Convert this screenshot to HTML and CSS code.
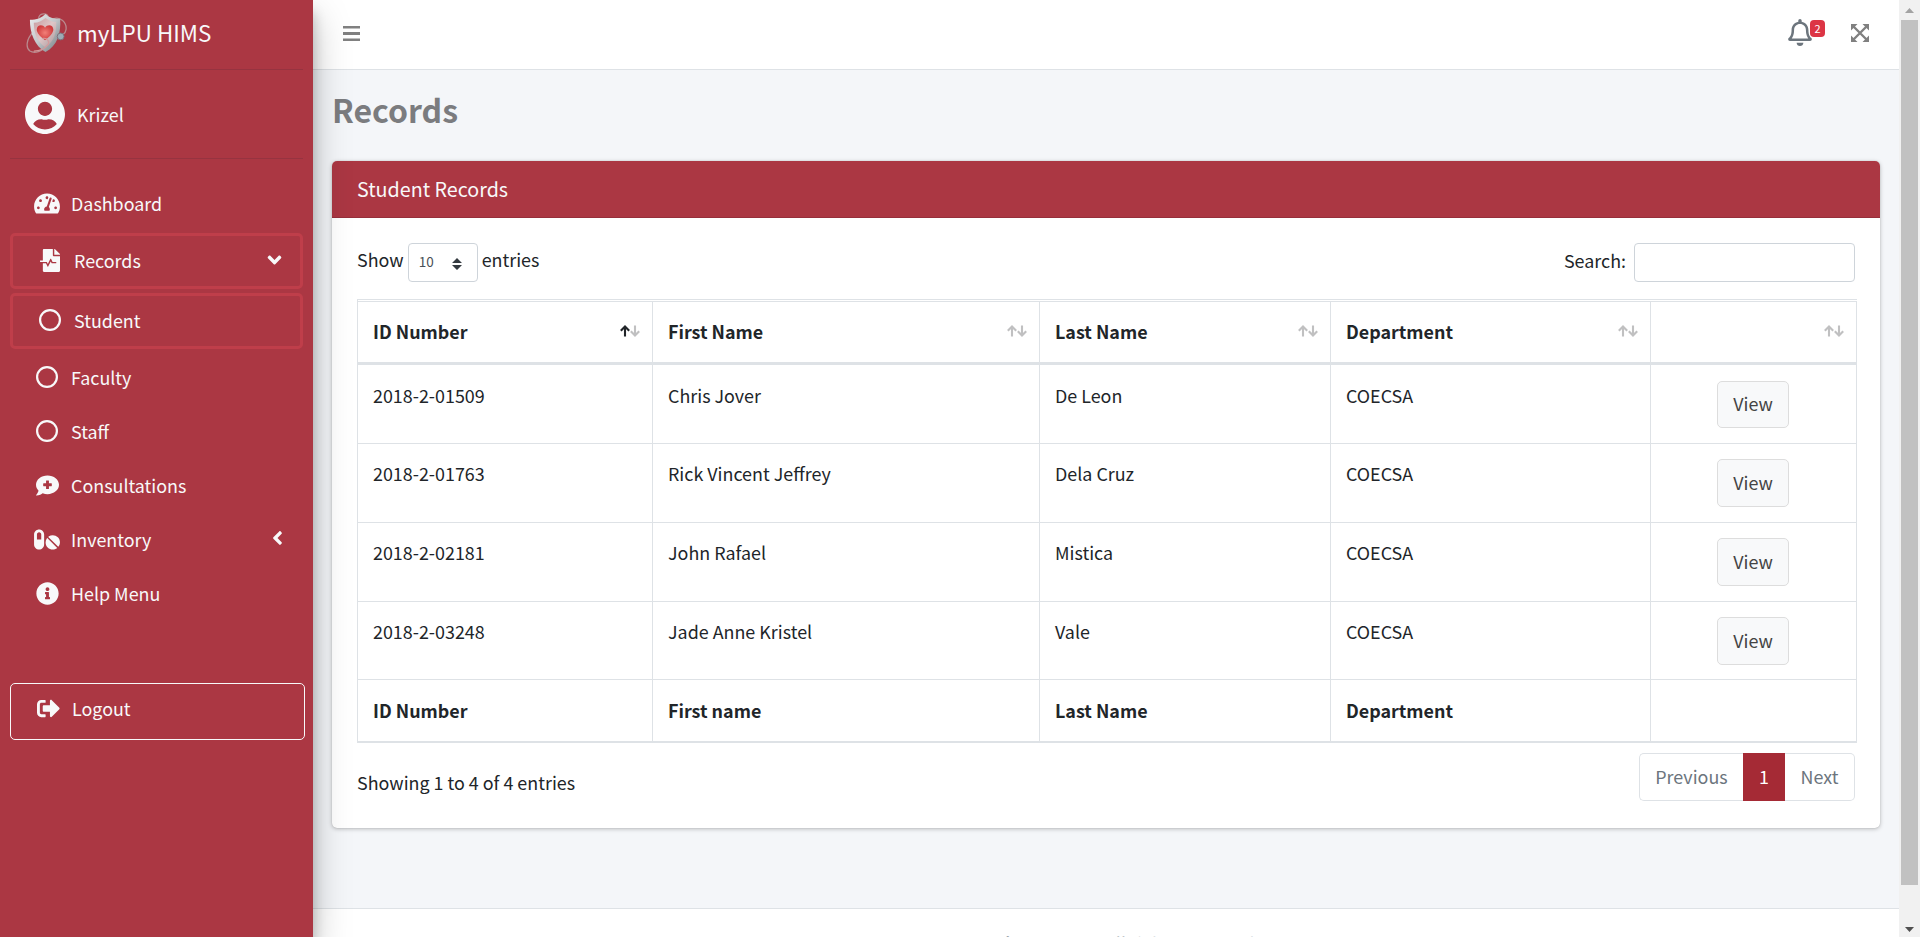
FILE: index.html
```html
<!DOCTYPE html>
<html lang="en">
<head>
<meta charset="utf-8">
<title>myLPU HIMS</title>
<link rel="stylesheet" href="styles.css">
</head>
<body>
<svg class="defs" aria-hidden="true">
  <symbol id="sort-up" viewBox="0 0 10 12"><path d="M5 11.6V1.6M.8 5.8 5 1.5l4.200 4.300" fill="none" stroke="currentColor" stroke-width="2.100"/></symbol>
  <symbol id="sort-down" viewBox="0 0 10 12"><path d="M5 .4v10M.8 6.200 5 10.500l4.200-4.300" fill="none" stroke="currentColor" stroke-width="2.100"/></symbol>
  <symbol id="ring" viewBox="0 0 22 22"><circle cx="11" cy="11" r="9.900" fill="none" stroke="currentColor" stroke-width="2.200"/></symbol>
  <symbol id="angle" viewBox="0 0 256 512"><path d="M31.7 239l136-136c9.4-9.4 24.6-9.4 33.9 0l22.6 22.6c9.4 9.4 9.4 24.6 0 33.9L127.9 256l96.4 96.4c9.4 9.4 9.4 24.6 0 33.9L201.7 409c-9.4 9.4-24.6 9.4-33.9 0l-136-136c-9.5-9.4-9.5-24.6-.1-34z"/></symbol>
</svg>
<div class="app">
  <aside class="sidebar">
    <div class="brand">
      <svg class="logo" viewBox="0 0 42 42">
        <defs>
          <linearGradient id="steel" x1="0" y1="0" x2="1" y2="1"><stop offset="0" stop-color="#eceeef"/><stop offset=".5" stop-color="#c3c7ca"/><stop offset="1" stop-color="#70777c"/></linearGradient>
          <linearGradient id="inner" x1="0" y1="0" x2="1" y2="1"><stop offset="0" stop-color="#c99b9e"/><stop offset=".5" stop-color="#dfc6c7"/><stop offset="1" stop-color="#a6989b"/></linearGradient>
          <radialGradient id="heart"><stop offset="0" stop-color="#f28078"/><stop offset="1" stop-color="#cf3d3e"/></radialGradient>
        </defs>
        <path d="M13 6c0-6 9-7 10-1M28 6c7-3 14 4 13 11-.3 2-1.500 4-3 5M7 20C1 26-1 35 4 39c5 3 14 0 19-7" fill="none" stroke="#b98a8e" stroke-width="1.300"/>
        <path d="M20 1c4 4 9 5 15 5 1 15-3 28-15 34C9 34 4 21 4 7c7 0 12-2 16-6z" fill="url(#steel)"/>
        <path d="M20 5c4 3 7 4 11 4 0 12-2 20-11 26C12 30 8 21 8 10c5 0 8-2 12-5z" fill="url(#inner)"/>
        <path d="M19.500 28C14 24 11 20 11 17c0-5 6-6 8.500-2 2.500-4 8.500-3 8.500 2 0 3-3 7-8.500 11z" fill="url(#heart)"/>
        <path d="M17 26c5-1 8 4 5 7-3 4-8 6-14 6" fill="none" stroke="#d49a9b" stroke-width="1.200"/>
        <circle cx="35.500" cy="24" r="3.500" fill="#9cabb5" stroke="#7b6f78"/>
      </svg>
      <span class="brand-name">myLPU HIMS</span>
    </div>
    <div class="user">
      <svg class="avatar" viewBox="0 8 496 496"><path d="M248 8C111 8 0 119 0 256s111 248 248 248 248-111 248-248S385 8 248 8zm0 96c48.600 0 88 39.400 88 88s-39.400 88-88 88-88-39.400-88-88 39.400-88 88-88zm0 344c-58.700 0-111.300-26.600-146.500-68.200 18.800-35.400 55.600-59.800 98.500-59.800 2.400 0 4.800.4 7.100 1.100 13 4.200 26.600 6.900 40.900 6.900 14.300 0 28-2.700 40.900-6.900 2.300-.7 4.700-1.100 7.100-1.100 42.900 0 79.700 24.400 98.500 59.800C359.300 421.400 306.700 448 248 448z"/></svg>
      <span class="user-name">Krizel</span>
    </div>
    <nav class="menu">
      <a class="item"><span class="ico"><svg class="w26" viewBox="0 0 576 512"><path d="M288 32C128.940 32 0 160.940 0 320c0 52.800 14.250 102.260 39.060 144.800 5.610 9.620 16.300 15.200 27.440 15.200h443c11.140 0 21.830-5.580 27.440-15.200C561.750 422.260 576 372.800 576 320c0-159.060-128.940-288-288-288zm0 64c14.710 0 26.580 10.130 30.320 23.650-1.110 2.260-2.640 4.230-3.450 6.670l-9.220 27.670c-5.130 3.490-10.970 6.010-17.640 6.010-17.670 0-32-14.330-32-32S270.330 96 288 96zM96 384c-17.670 0-32-14.330-32-32s14.330-32 32-32 32 14.330 32 32-14.330 32-32 32zm48-160c-17.670 0-32-14.330-32-32s14.330-32 32-32 32 14.330 32 32-14.330 32-32 32zm246.770-72.410l-61.330 184C343.130 347.330 352 364.540 352 384c0 11.720-3.380 22.550-8.880 32H232.880c-5.500-9.450-8.880-20.280-8.880-32 0-33.940 26.500-61.430 59.900-63.590l61.340-184.010c4.170-12.560 17.730-19.450 30.360-15.170 12.570 4.190 19.350 17.790 15.170 30.360zm14.660 57.200l15.520-46.550c3.470-1.290 7.130-2.230 11.050-2.230 17.670 0 32 14.330 32 32s-14.330 32-32 32c-11.380-.01-20.890-6.280-26.570-15.220zM480 384c-17.670 0-32-14.330-32-32s14.330-32 32-32 32 14.330 32 32-14.330 32-32 32z"/></svg></span><span class="label">Dashboard</span></a>
      <a class="item boxed"><span class="ico"><svg class="w20" viewBox="0 0 448 512"><path d="M288 136V0H88C74.700 0 64 10.700 64 24v232H8c-4.400 0-8 3.600-8 8v16c0 4.400 3.600 8 8 8h140.900c3 0 5.800 1.700 7.200 4.400l19.900 39.800 56.800-113.700c2.900-5.900 11.400-5.900 14.300 0l34.700 69.500H352c8.800 0 16 7.200 16 16s-7.200 16-16 16h-89.900L240 275.800l-56.800 113.700c-2.900 5.900-11.400 5.900-14.300 0L134.100 320H64v168c0 13.300 10.700 24 24 24h336c13.300 0 24-10.700 24-24V160H312c-13.200 0-24-10.800-24-24zm153-31L343.100 7c-4.500-4.500-10.600-7-17-7H320v128h128v-6.100c0-6.300-2.500-12.400-7-16.900z"/></svg></span><span class="label">Records</span><svg class="angle open"><use href="#angle"/></svg></a>
      <a class="item boxed"><span class="ico"><svg class="w22"><use href="#ring"/></svg></span><span class="label">Student</span></a>
      <a class="item"><span class="ico"><svg class="w22"><use href="#ring"/></svg></span><span class="label">Faculty</span></a>
      <a class="item"><span class="ico"><svg class="w22"><use href="#ring"/></svg></span><span class="label">Staff</span></a>
      <a class="item"><span class="ico"><svg class="w23" viewBox="0 0 512 512"><path d="M256 32C114.620 32 0 125.120 0 240c0 49.560 21.410 95 57 130.740C44.460 421.050 2.700 466 2.200 466.500A8 8 0 0 0 8 480c66.260 0 116-31.750 140.600-51.380A304.660 304.660 0 0 0 256 448c141.390 0 256-93.120 256-208S397.390 32 256 32zm96 232a8 8 0 0 1-8 8h-56v56a8 8 0 0 1-8 8h-48a8 8 0 0 1-8-8v-56h-56a8 8 0 0 1-8-8v-48a8 8 0 0 1 8-8h56v-56a8 8 0 0 1 8-8h48a8 8 0 0 1 8 8v56h56a8 8 0 0 1 8 8z"/></svg></span><span class="label">Consultations</span></a>
      <a class="item"><span class="ico"><svg class="w26" viewBox="0 0 576 512"><path d="M112 32C50.100 32 0 82.100 0 144v224c0 61.900 50.100 112 112 112s112-50.100 112-112V144c0-61.900-50.100-112-112-112zm48 224H64V144c0-26.500 21.500-48 48-48s48 21.500 48 48v112zm139.700-29.700c-3.500-3.500-9.400-3.100-12.300.8-45.500 62.500-40.400 150.100 15.900 206.400 56.300 56.300 143.900 61.400 206.400 15.900 4-2.900 4.300-8.800.8-12.300L299.700 226.300zm229.800-19c-56.300-56.300-143.900-61.400-206.400-15.900-4 2.900-4.300 8.800-.8 12.300l210.800 210.800c3.500 3.500 9.400 3.100 12.300-.8 45.600-62.500 40.500-150.100-15.900-206.400z"/></svg></span><span class="label">Inventory</span><svg class="angle"><use href="#angle"/></svg></a>
      <a class="item"><span class="ico"><svg class="w23" viewBox="0 0 512 512"><path d="M256 8C119.043 8 8 119.083 8 256c0 136.997 111.043 248 248 248s248-111.003 248-248C504 119.083 392.957 8 256 8zm0 110c23.196 0 42 18.804 42 42s-18.804 42-42 42-42-18.804-42-42 18.804-42 42-42zm56 254c0 6.627-5.373 12-12 12h-88c-6.627 0-12-5.373-12-12v-24c0-6.627 5.373-12 12-12h12v-64h-12c-6.627 0-12-5.373-12-12v-24c0-6.627 5.373-12 12-12h64c6.627 0 12 5.373 12 12v100h12c6.627 0 12 5.373 12 12v24z"/></svg></span><span class="label">Help Menu</span></a>
      <a class="item logout"><span class="ico"><svg class="w23" viewBox="0 0 512 512"><path d="M497 273L329 441c-15 15-41 4.500-41-17v-96H152c-13.300 0-24-10.700-24-24v-96c0-13.300 10.700-24 24-24h136V88c0-21.400 25.900-32 41-17l168 168c9.300 9.400 9.300 24.600 0 34zM192 436v-40c0-6.600-5.400-12-12-12H96c-17.700 0-32-14.300-32-32V160c0-17.700 14.300-32 32-32h84c6.600 0 12-5.400 12-12V76c0-6.600-5.400-12-12-12H96c-53 0-96 43-96 96v192c0 53 43 96 96 96h84c6.600 0 12-5.400 12-12z"/></svg></span><span class="label">Logout</span></a>
    </nav>
  </aside>

  <div class="main">
    <header class="topbar">
      <svg class="bars" viewBox="0 0 17 15"><path d="M0 0h17v2.400H0zM0 6h17v3H0zM0 12.600h17v2.400H0z"/></svg>
      <div class="tools">
        <span class="bell-wrap">
          <svg class="bell" viewBox="0 0 448 512"><path d="M439.390 362.290c-19.320-20.760-55.470-51.990-55.470-154.290 0-77.700-54.480-139.900-127.940-155.160V32c0-17.670-14.320-32-31.980-32s-31.980 14.330-31.980 32v20.840C118.560 68.100 64.080 130.300 64.080 208c0 102.300-36.150 133.530-55.470 154.290-6 6.450-8.660 14.160-8.610 21.710.11 16.400 12.980 32 32.100 32h383.800c19.120 0 32-15.600 32.100-32 .05-7.550-2.610-15.270-8.610-21.710zM67.530 368c21.220-27.970 44.420-74.330 44.530-159.420 0-.2-.06-.38-.06-.58 0-61.860 50.140-112 112-112s112 50.140 112 112c0 .2-.06.38-.06.58.11 85.100 23.310 131.460 44.530 159.420H67.530zM224 512c35.320 0 63.970-28.650 63.970-64H160.030c0 35.350 28.650 64 63.970 64z"/></svg>
          <span class="badge">2</span>
        </span>
        <svg class="expand" viewBox="0 0 18 18"><path d="M0 0h6.500L0 6.500zM18 0v6.500L11.500 0zM0 18v-6.500L6.500 18zM18 18h-6.500l6.500-6.500z"/><path d="M2.500 2.500l13 13M15.500 2.500l-13 13" fill="none" stroke="currentColor" stroke-width="2.400"/></svg>
      </div>
    </header>

    <div class="content">
      <h1 class="title">Records</h1>
      <section class="card">
        <div class="card-head"><span>Student Records</span></div>
        <div class="card-body">
          <div class="controls">
            <div class="length"><span class="word">Show</span>
              <span class="select"><span>10</span><svg class="caret" viewBox="0 0 10 12"><path d="M0 5l5-5 5 5zM0 7l5 5 5-5z"/></svg></span>
              <span class="word">entries</span></div>
            <label class="search"><span class="word">Search:</span><input class="search-input" type="text"></label>
          </div>
          <table class="grid">
            <colgroup><col class="c1"><col class="c2"><col class="c3"><col class="c4"><col class="c5"></colgroup>
            <thead><tr>
              <th><div class="th">ID Number<span class="sort"><svg class="on"><use href="#sort-up"/></svg><svg><use href="#sort-down"/></svg></span></div></th>
              <th><div class="th">First Name<span class="sort"><svg><use href="#sort-up"/></svg><svg><use href="#sort-down"/></svg></span></div></th>
              <th><div class="th">Last Name<span class="sort"><svg><use href="#sort-up"/></svg><svg><use href="#sort-down"/></svg></span></div></th>
              <th><div class="th">Department<span class="sort"><svg><use href="#sort-up"/></svg><svg><use href="#sort-down"/></svg></span></div></th>
              <th><div class="th"><span class="sort"><svg><use href="#sort-up"/></svg><svg><use href="#sort-down"/></svg></span></div></th>
            </tr></thead>
            <tbody>
              <tr><td>2018-2-01509</td><td>Chris Jover</td><td>De Leon</td><td>COECSA</td><td class="act"><button class="view">View</button></td></tr>
              <tr><td>2018-2-01763</td><td>Rick Vincent Jeffrey</td><td>Dela Cruz</td><td>COECSA</td><td class="act"><button class="view">View</button></td></tr>
              <tr><td>2018-2-02181</td><td>John Rafael</td><td>Mistica</td><td>COECSA</td><td class="act"><button class="view">View</button></td></tr>
              <tr><td>2018-2-03248</td><td>Jade Anne Kristel</td><td>Vale</td><td>COECSA</td><td class="act"><button class="view">View</button></td></tr>
            </tbody>
            <tfoot><tr><th>ID Number</th><th>First name</th><th>Last Name</th><th>Department</th><th></th></tr></tfoot>
          </table>
          <div class="foot">
            <span class="info">Showing 1 to 4 of 4 entries</span>
            <div class="pager"><span class="page prev">Previous</span><span class="page current">1</span><span class="page next">Next</span></div>
          </div>
        </div>
      </section>
    </div>
    <footer class="footer"><strong class="copy">Copyright © 2022. </strong>All rights reserved.</footer>
  </div>

  <div class="scrollbar">
    <svg class="arrow up" viewBox="0 0 9 5"><path d="M0 5l4.500-5L9 5z"/></svg>
    <div class="thumb"></div>
    <svg class="arrow down" viewBox="0 0 9 5"><path d="M0 0h9L4.500 5z"/></svg>
  </div>
</div>
</body>
</html>
```
FILE: styles.css
```css
* { box-sizing: border-box; }
html, body { margin: 0; height: 100%; overflow: hidden; }
body {
  font-family: "Noto Sans CJK JP", "Noto Sans CJK SC", "Open Sans", sans-serif;
  font-size: 17.900px;
  line-height: 30px;
  color: #212529;
  background: #f4f6f9;
  white-space: nowrap;
}
svg { display: block; fill: currentColor; flex: none; }
.defs { display: none; }
.app { display: flex; height: 937px; width: 1920px; overflow: hidden; }

.sidebar {
  position: relative;
  z-index: 2;
  width: 313px;
  flex: none;
  background: #ab3743;
  color: #f8f9fa;
  box-shadow: 0 17px 35px rgba(0, 0, 0, .25), 0 12px 12px rgba(0, 0, 0, .22);
}
.brand, .user {
  display: flex;
  align-items: center;
  margin: 0 10px;
  padding-left: 16px;
  border-bottom: 1px solid #973340;
}
.brand { height: 70px; padding-bottom: 3px; }
.logo { width: 41px; height: 41px; margin-right: 10px; }
.brand-name { font-size: 22.400px; padding-bottom: 2px; }
.user { height: 89px; padding-left: 15px; }
.avatar { width: 40px; height: 40px; margin: 0 12px 1px 0; }
.menu { display: flex; flex-direction: column; gap: 4px; padding: 20px 10px 0; }
.item { display: flex; align-items: center; height: 50px; padding: 0 20px 0 24px; }
.boxed { height: 56px; padding: 0 17px 0 24px; border: 3px solid #bf3e4a; border-radius: 5px; }
.ico { display: flex; justify-content: center; width: 26px; margin-right: 11px; padding-bottom: 2px; }
.label { padding-bottom: 2px; }
.w20 { width: 20px; height: 23px; }
.w22 { width: 22px; height: 22px; }
.w23 { width: 23px; height: 23px; }
.w26 { width: 26px; height: 23px; }
.angle { width: 11px; height: 22px; margin: 0 0 4px auto; }
.open { transform: rotate(-90deg); margin: 0 3px 2px auto; }
.logout { height: 57px; width: 295px; margin-top: 60px; border: 1px solid #f8f9fa; border-radius: 5px; padding-bottom: 5px; }

.main { display: flex; flex-direction: column; width: 1586px; flex: none; }
.topbar {
  display: flex;
  align-items: center;
  justify-content: space-between;
  height: 70px;
  flex: none;
  padding: 0 30px 3px;
  background: #fff;
  border-bottom: 1px solid #dee2e6;
  color: #808080;
}
.bars { width: 17px; height: 15px; }
.tools { display: flex; align-items: center; gap: 39px; }
.bell-wrap { position: relative; color: #6c757d; padding-bottom: 1px; }
.bell { width: 24px; height: 27px; }
.badge {
  position: absolute;
  left: 22px;
  top: 1px;
  width: 15px;
  height: 17px;
  border-radius: 4px;
  background: #dc3545;
  color: #fff;
  font-size: 11px;
  line-height: 17px;
  text-align: center;
}
.expand { width: 18px; height: 18px; }

.content { height: 838px; flex: none; padding: 0 19px; }
.title { margin: 0; padding-top: 17px; height: 91px; font-size: 32px; line-height: 44px; font-weight: 700; color: #7b7c7f; }
.card { height: 667px; background: #fff; border-radius: 5px; box-shadow: 0 0 1px rgba(0, 0, 0, .2), 0 1px 4px rgba(0, 0, 0, .25); }
.card-head {
  height: 57px;
  padding: 13px 25px 0;
  background: #ab3743;
  border-bottom: 1px solid #962f3b;
  border-radius: 5px 5px 0 0;
  color: #f8f9fa;
  font-size: 19.700px;
}
.card-body { padding: 25px 25px 0; }
.controls { display: flex; justify-content: space-between; align-items: center; height: 39px; }
.length { display: flex; align-items: center; gap: 4px; }
.word { padding-bottom: 8px; }
.search .word { padding-bottom: 6px; }
.select {
  display: flex;
  align-items: center;
  justify-content: space-between;
  width: 70px;
  height: 39px;
  padding: 0 15px 0 10px;
  border: 1px solid #ced4da;
  border-radius: 4px;
  font-size: 13.500px;
  color: #495057;
}
.select span { padding-bottom: 3px; }
.caret { width: 10px; height: 12px; color: #343a40; margin-top: 2px; }
.search { display: flex; align-items: center; gap: 8px; }
.search-input { width: 221px; height: 39px; border: 1px solid #ced4da; border-radius: 4px; padding: 0 10px; font: inherit; background: #fff; }

.grid {
  width: 1500px;
  margin-top: 17px;
  table-layout: fixed;
  border-collapse: separate;
  border-spacing: 0;
  border: 1px solid #dee2e6;
  border-width: 1px 0 1px 1px;
  padding-top: 1px;
}
.c1 { width: 295px; }
.c2 { width: 387px; }
.c3 { width: 291px; }
.c4 { width: 320px; }
.c5 { width: 206px; }
.grid th, .grid td { padding: 0 15px; text-align: left; vertical-align: top; border-right: 1px solid #dee2e6; border-bottom: 1px solid #dee2e6; }
.grid thead th { height: 64px; padding: 14px 12px 0 15px; border-top: 1px solid #dee2e6; border-bottom-width: 3px; }
.grid td { height: 79px; padding-top: 14px; }
.grid tbody tr:first-child td { padding-top: 15px; }
.grid tbody tr:last-child td { height: 78px; }
.grid tfoot th { height: 62px; padding-top: 15px; }
.th { display: flex; justify-content: space-between; height: 30px; }
.sort { display: flex; padding-top: 9px; margin-left: auto; color: #c0c0c1; }
.sort svg { width: 10px; height: 12px; }
.sort .on { color: #212529; }
.grid td.act { text-align: center; padding: 15px 16px 0 15px; }
.grid tbody tr:first-child td.act { padding-top: 16px; }
.view {
  width: 72px;
  height: 48px;
  padding: 0 0 3px;
  border: 1px solid #ddd;
  border-radius: 5px;
  background: #f8f9fa;
  color: #444;
  font: inherit;
}
.grid tbody tr:first-child .view { height: 47px; }
.foot { display: flex; justify-content: space-between; align-items: flex-start; padding-top: 10px; }
.info { padding-top: 14px; }
.pager { display: flex; height: 48px; line-height: 45px; color: #6c757d; }
.page { border: 1px solid #dee2e6; text-align: center; }
.prev { width: 104px; border-radius: 5px 0 0 5px; border-right: 0; }
.current { width: 42px; background: #a52a35; border-color: #a52a35; color: #fff; }
.next { width: 70px; border-radius: 0 5px 5px 0; border-left: 0; }
.footer { flex: none; height: 72px; padding-top: 19px; background: #fff; border-top: 1px solid #dee2e6; text-align: center; color: #869099; }
.copy { word-spacing: -3.500px; }

.scrollbar { display: flex; flex-direction: column; align-items: center; width: 21px; flex: none; background: #f1f1f1; padding-top: 8px; }
.arrow { width: 9px; height: 5px; }
.up { color: #a3a3a3; }
.down { color: #505050; margin-top: 42px; }
.thumb { width: 17px; height: 865px; margin-top: 7px; flex: none; background: #c1c1c1; }
```
